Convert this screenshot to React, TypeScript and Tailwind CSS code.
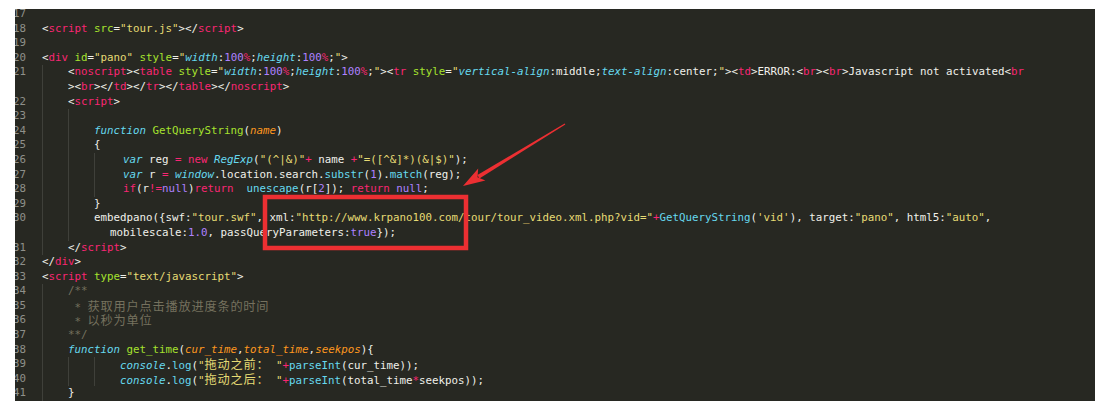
import React from "react";

type Tok = [string, string];

const C: Record<string, string> = {
  w: "text-[#f0f0ea]",
  p: "text-[#f92672]",
  g: "text-[#a6e22e]",
  y: "text-[#e6db74]",
  b: "text-[#66d9ef]",
  bi: "text-[#66d9ef] italic",
  pu: "text-[#ae81ff]",
  o: "text-[#fd971f] italic",
  c: "text-[#75715e]",
  cz: "text-[#75715e] text-[12.2px] tracking-[0.8px] font-['Noto_Sans_CJK_SC',sans-serif]",
  yz: "text-[#e6db74] text-[12.2px] tracking-[0.8px] font-['Noto_Sans_CJK_SC',sans-serif]",
  s: "",
};

type Row = { n?: number; ind: number; toks: Tok[]; extra?: string };

const rows: Row[] = [
  { n: 17, ind: 0, toks: [] },
  {
    n: 18,
    ind: 0,
    toks: [["w", "<"], ["p", "script"], ["s", " "], ["g", "src"], ["w", "="], ["y", '"tour.js"'], ["w", "></"], ["p", "script"], ["w", ">"]],
  },
  { n: 19, ind: 0, toks: [] },
  {
    n: 20,
    ind: 0,
    toks: [
      ["w", "<"], ["p", "div"], ["s", " "], ["g", "id"], ["w", "="], ["y", '"pano"'], ["s", " "], ["g", "style"], ["w", "="], ["y", '"'],
      ["bi", "width"], ["w", ":"], ["pu", "100"], ["p", "%"], ["w", ";"], ["bi", "height"], ["w", ":"], ["pu", "100"], ["p", "%"], ["w", ";"], ["y", '"'], ["w", ">"],
    ],
  },
  {
    n: 21,
    ind: 1,
    toks: [
      ["w", "<"], ["p", "noscript"], ["w", "><"], ["p", "table"], ["s", " "], ["g", "style"], ["w", "="], ["y", '"'],
      ["bi", "width"], ["w", ":"], ["pu", "100"], ["p", "%"], ["w", ";"], ["bi", "height"], ["w", ":"], ["pu", "100"], ["p", "%"], ["w", ";"], ["y", '"'],
      ["w", "><"], ["p", "tr"], ["s", " "], ["g", "style"], ["w", "="], ["y", '"'], ["bi", "vertical-align"], ["w", ":middle;"], ["bi", "text-align"], ["w", ":center;"], ["y", '"'],
      ["w", "><"], ["p", "td"], ["w", ">ERROR:<"], ["p", "br"], ["w", "><"], ["p", "br"], ["w", ">Javascript not activated<"], ["p", "br"],
    ],
  },
  {
    ind: 1,
    toks: [["w", "><"], ["p", "br"], ["w", "></"], ["p", "td"], ["w", "></"], ["p", "tr"], ["w", "></"], ["p", "table"], ["w", "></"], ["p", "noscript"], ["w", ">"]],
  },
  { n: 22, ind: 1, toks: [["w", "<"], ["p", "script"], ["w", ">"]] },
  { n: 23, ind: 2, toks: [] },
  { n: 24, ind: 2, toks: [["bi", "function"], ["s", " "], ["g", "GetQueryString"], ["w", "("], ["o", "name"], ["w", ")"]] },
  { n: 25, ind: 2, toks: [["w", "{"]] },
  {
    n: 26,
    ind: 3,
    extra: "pl-[3px]",
    toks: [
      ["bi", "var"], ["w", " reg "], ["p", "="], ["s", " "], ["p", "new"], ["s", " "], ["bi", "RegExp"], ["w", "("], ["y", '"(^|&)"'], ["p", "+"], ["w", " name "], ["p", "+"], ["y", '"=([^&]*)(&|$)"'], ["w", ");"],
    ],
  },
  {
    n: 27,
    ind: 3,
    extra: "pl-[3px]",
    toks: [
      ["bi", "var"], ["w", " r "], ["p", "="], ["s", " "], ["bi", "window"], ["w", ".location.search."], ["b", "substr"], ["w", "("], ["pu", "1"], ["w", ")."], ["b", "match"], ["w", "(reg);"],
    ],
  },
  {
    n: 28,
    ind: 3,
    extra: "pl-[3px]",
    toks: [
      ["p", "if"], ["w", "(r"], ["p", "!="], ["pu", "null"], ["w", ")"], ["p", "return"], ["s", "  "], ["b", "unescape"], ["w", "(r["], ["pu", "2"], ["w", "]); "], ["p", "return"], ["s", " "], ["pu", "null"], ["w", ";"],
    ],
  },
  { n: 29, ind: 2, toks: [["w", "}"]] },
  {
    n: 30,
    ind: 2,
    toks: [
      ["w", "embedpano({swf:"], ["y", '"tour.swf"'], ["w", ", xml:"], ["y", '"http://www.krpano100.com/tour/tour_video.xml.php?vid="'], ["p", "+"], ["b", "GetQueryString"], ["w", "("], ["y", "'vid'"], ["w", "), target:"], ["y", '"pano"'], ["w", ", html5:"], ["y", '"auto"'], ["w", ","],
    ],
  },
  {
    ind: 2,
    extra: "pl-[3px]",
    toks: [["s", "  "], ["w", "mobilescale:"], ["pu", "1.0"], ["w", ", passQueryParameters:"], ["pu", "true"], ["w", "});"]],
  },
  { n: 31, ind: 1, toks: [["w", "</"], ["p", "script"], ["w", ">"]] },
  { n: 32, ind: 0, toks: [["w", "</"], ["p", "div"], ["w", ">"]] },
  {
    n: 33,
    ind: 0,
    toks: [["w", "<"], ["p", "script"], ["s", " "], ["g", "type"], ["w", "="], ["y", '"text/javascript"'], ["w", ">"]],
  },
  { n: 34, ind: 1, toks: [["c", "/**"]] },
  { n: 35, ind: 1, toks: [["c", " * "], ["cz", "获取用户点击播放进度条的时间"]] },
  { n: 36, ind: 1, toks: [["c", " * "], ["cz", "以秒为单位"]] },
  { n: 37, ind: 1, toks: [["c", "**/"]] },
  {
    n: 38,
    ind: 1,
    toks: [["bi", "function"], ["s", " "], ["g", "get_time"], ["w", "("], ["o", "cur_time"], ["w", ","], ["o", "total_time"], ["w", ","], ["o", "seekpos"], ["w", "){"]],
  },
  {
    n: 39,
    ind: 3,
    toks: [["bi", "console"], ["w", "."], ["b", "log"], ["w", "("], ["y", '"'], ["yz", "拖动之前："], ["y", ' "'], ["p", "+"], ["b", "parseInt"], ["w", "(cur_time));"]],
  },
  {
    n: 40,
    ind: 3,
    toks: [["bi", "console"], ["w", "."], ["b", "log"], ["w", "("], ["y", '"'], ["yz", "拖动之后："], ["y", ' "'], ["p", "+"], ["b", "parseInt"], ["w", "(total_time"], ["p", "*"], ["w", "seekpos));"]],
  },
  { n: 41, ind: 1, toks: [["w", "}"]] },
];

function Line({ row }: { row: Row }) {
  const guides = Array.from({ length: row.ind });
  return (
    <div className="flex h-[14.6px] leading-[14.6px] whitespace-pre">
      <div className="w-[24px] -ml-[13px] shrink-0 text-right text-[#8f908a]">{row.n ?? ""}</div>
      <div className="ml-[16px] flex items-stretch">
        {guides.map((_, i) => (
          <span key={i} className="inline-block w-[26px] h-[14.6px] border-l border-[#3f403a] shrink-0" />
        ))}
        <span className={row.extra ?? ""}>
          {row.toks.map(([k, t], i) => (
            <span key={i} className={C[k]}>
              {t}
            </span>
          ))}
        </span>
      </div>
    </div>
  );
}

export default function App() {
  return (
    <div className="relative w-[1099px] h-[413px] bg-white pt-[9px] pl-[15px] overflow-hidden">
      <div className="w-[1080px] h-[392px] bg-[#272822] overflow-hidden font-['DejaVu_Sans_Mono',monospace] text-[10.8px]">
        <div className="-mt-[2px]">
          {rows.map((r, i) => (
            <Line key={i} row={r} />
          ))}
        </div>
      </div>
      <svg className="absolute left-0 top-0 pointer-events-none" width="1099" height="413" viewBox="0 0 1099 413">
        <rect x="265" y="197" width="201" height="51" fill="none" stroke="#ec2f32" strokeWidth="4.5" />
        <polygon points="565.3,124.4 564.7,123.6 477.4,175.0 479.4,178.4" fill="#ec2f32" />
        <polygon points="463,186 485.4,180.6 477.5,177.2 478.2,168.6" fill="#ec2f32" />
      </svg>
    </div>
  );
}
